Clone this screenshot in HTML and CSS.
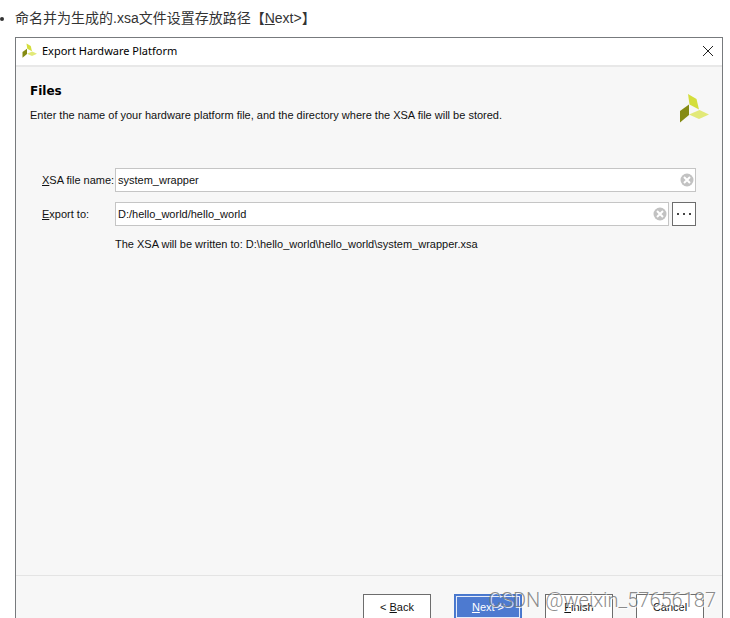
FILE: index.html
```html
<!DOCTYPE html>
<html lang="zh-CN">
<head>
<meta charset="utf-8">
<title>Export Hardware Platform</title>
<link rel="stylesheet" href="styles.css">
</head>
<body>
<svg class="defs" aria-hidden="true">
  <symbol id="logo" viewBox="0 0 30 30">
    <path fill="#d4de3c" d="M9 1 17.500 6 20 16.500 10.500 11.500z"/>
    <path fill="#858b13" d="M1 18 10 11.500V22L1 29.500z"/>
    <path fill="#e2e978" d="M10 21.500 20.500 17 30 21.500 20 26z"/>
  </symbol>
  <symbol id="clear" viewBox="0 0 14 14">
    <circle cx="7" cy="7" r="6.500" fill="#c2c2c2"/>
    <path d="M4 4l6 6M10 4l-6 6" stroke="#fff" stroke-width="2"/>
  </symbol>
</svg>
<ul class="steps">
  <li>命名并为生成的.xsa文件设置存放路径【<u>N</u>ext&gt;】</li>
</ul>
<main class="window">
  <header class="titlebar">
    <svg class="app-icon" aria-hidden="true"><use href="#logo"/></svg>
    <span class="title">Export Hardware Platform</span>
    <button class="close" type="button" aria-label="Close">
      <svg viewBox="0 0 12 12" width="12" height="12"><path d="M1 1l10 10M11 1L1 11" stroke="#222" fill="none"/></svg>
    </button>
  </header>
  <section class="content">
    <div class="intro">
      <div>
        <h1>Files</h1>
        <p>Enter the name of your hardware platform file, and the directory where the XSA file will be stored.</p>
      </div>
      <svg class="brand" aria-hidden="true"><use href="#logo"/></svg>
    </div>
    <form class="form">
      <label for="name"><u>X</u>SA file name:</label>
      <div class="row">
        <div class="field">
          <input id="name" type="text" value="system_wrapper">
          <button class="clear" type="button" aria-label="Clear file name"><svg><use href="#clear"/></svg></button>
        </div>
      </div>
      <label for="dir"><u>E</u>xport to:</label>
      <div class="row">
        <div class="field">
          <input id="dir" type="text" value="D:/hello_world/hello_world">
          <button class="clear" type="button" aria-label="Clear directory"><svg><use href="#clear"/></svg></button>
        </div>
        <button class="browse" type="button" aria-label="Browse">
          <svg viewBox="0 0 14 4" width="14" height="4" fill="#444"><path d="M0 1h2v2H0zM6 1h2v2H6zM12 1h2v2h-2z"/></svg>
        </button>
      </div>
      <p class="note">The XSA will be written to: D:\hello_world\hello_world\system_wrapper.xsa</p>
    </form>
  </section>
  <footer class="actions">
    <button type="button">&lt; <u>B</u>ack</button>
    <button class="primary" type="button"><u>N</u>ext &gt;</button>
    <button type="button"><u>F</u>inish</button>
    <button type="button">Cancel</button>
  </footer>
</main>
<div class="watermark">CSDN @weixin_57656187</div>
</body>
</html>
```
FILE: styles.css
```css
* {
  box-sizing: border-box;
}

body {
  margin: 0;
  height: 100vh;
  overflow: hidden;
  position: relative;
  display: flex;
  flex-direction: column;
  background: #fff;
  color: #111;
  font: 11px/16px "Liberation Sans", "Noto Sans CJK SC", sans-serif;
}

h1,
p {
  margin: 0;
}

button,
input {
  font: inherit;
  color: inherit;
}

button {
  padding: 0;
}

.defs {
  position: absolute;
  width: 0;
  height: 0;
}

.steps {
  margin: 0;
  padding: 6px 0 7px 15px;
  color: #333;
  font-size: 14px;
  line-height: 24px;
}

.window {
  flex: 1;
  min-height: 0;
  display: flex;
  flex-direction: column;
  margin: 0 7px 0 15px;
  border: 1px solid #777a7d;
  border-bottom: 0;
  background: #f7f7f7;
}

.titlebar {
  display: flex;
  align-items: center;
  gap: 5px;
  height: 29px;
  padding: 0 8px 2px 6px;
  border-bottom: 2px solid #e8e8e8;
  background: #fff;
}

.app-icon {
  width: 15px;
  height: 15px;
}

.title {
  flex: 1;
  color: #000;
  font-family: "Noto Sans", sans-serif;
  font-size: 11px;
}

.close,
.clear {
  display: flex;
  border: 0;
  background: none;
}

.content {
  flex: 1;
}

.intro {
  display: flex;
  justify-content: space-between;
  padding: 16px 13px 0 14px;
}

h1 {
  margin-bottom: 8px;
  color: #000;
  font: bold 12px/16px "DejaVu Sans", sans-serif;
}

.brand {
  width: 30px;
  height: 30px;
  margin-top: 10px;
}

.form {
  display: grid;
  grid-template-columns: 73px 1fr;
  align-items: center;
  row-gap: 10px;
  padding: 45px 26px 0;
  white-space: nowrap;
}

.row {
  display: flex;
  gap: 3px;
}

.field {
  flex: 1;
  display: flex;
  align-items: center;
  height: 24px;
  padding-right: 1px;
  border: 1px solid #c5c5c5;
  background: #fff;
}

.field input {
  flex: 1;
  min-width: 0;
  padding: 0 2px;
  border: 0;
  outline: 0;
  background: none;
}

.clear svg {
  width: 14px;
  height: 14px;
}

.browse {
  display: flex;
  align-items: center;
  justify-content: center;
  width: 24px;
  height: 24px;
  border: 1px solid #6d6d6d;
  background: #fff;
}

.note {
  grid-column: 2;
}

.actions {
  display: flex;
  justify-content: flex-end;
  gap: 23px;
  height: 43px;
  padding: 18px 18px 0 0;
  border-top: 1px solid #e4e4e4;
  overflow: hidden;
}

.actions button {
  flex: none;
  width: 68px;
  height: 26px;
  border: 1px solid #6d6d6d;
  background: #fff;
}

.actions .primary {
  border: 1px solid #4777cc;
  outline: 1px solid #e4ecfa;
  outline-offset: -3px;
  background: #4d7ad0;
  color: #fff;
}

.watermark {
  position: absolute;
  right: 14px;
  bottom: 6px;
  color: rgba(120, 120, 120, 0.85);
  font: 300 20px/24px Roboto, sans-serif;
  text-shadow: 1px 1px 0 rgba(255, 255, 255, 0.8);
  pointer-events: none;
}
```
